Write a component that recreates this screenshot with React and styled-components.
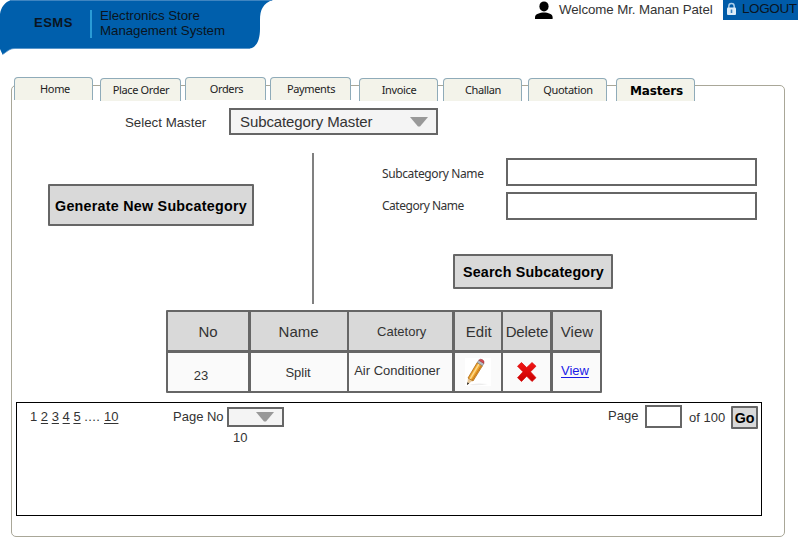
import React from "react";
import styled, { createGlobalStyle } from "styled-components";

const sans = '"Liberation Sans", Arial, sans-serif';
const humanist = '"Noto Sans", "Open Sans", sans-serif';
const dark = "#333";
const line = "#666";

const GlobalStyle = createGlobalStyle`
  * { box-sizing: border-box; }
  body { margin: 0; background: #fff; font-family: ${sans}; color: ${dark}; }
`;

const Page = styled.div`
  width: 800px;
  height: 550px;
  overflow: hidden;
`;

const Label = styled.span`
  display: block;
  white-space: pre;
  font-family: ${(p) => p.$font || sans};
  font-size: ${(p) => p.$size || 13}px;
  line-height: 16px;
  letter-spacing: ${(p) => p.$track || 0}px;
  font-weight: ${(p) => (p.$bold ? 700 : 400)};
  color: ${(p) => p.$color || dark};
  margin: ${(p) => p.$margin || 0};
`;

const Header = styled.header`
  display: flex;
  align-items: flex-start;
  height: 77px;
  & > * { flex: none; }
`;

const Brand = styled.div`
  position: relative;
  display: flex;
  width: 534px;
  height: 56px;
`;

const Banner = styled.svg`
  position: absolute;
  left: 0;
  top: 0;
  z-index: -1;
`;

const BrandRule = styled.div`
  width: 2px;
  height: 28px;
  margin: 10px 8px 0 17px;
  background: #2a9bd6;
`;

const BrandName = styled.div`
  width: 73px;
  padding: 15px 0 0 34px;
`;

const BrandTitle = styled.div`
  padding-top: 8px;
  ${Label} { line-height: 15px; }
`;

const Logout = styled.a`
  display: flex;
  width: 75px;
  height: 20px;
  margin-left: auto;
  margin-right: 2px;
  padding-left: 3px;
  background: #005ba8;
  & > svg { flex: none; }
`;

const Tabs = styled.nav`
  position: relative;
  display: flex;
  height: 24px;
  margin: 0 0 -16px 14px;
`;

const Tab = styled.div`
  width: ${(p) => p.$w}px;
  height: 23px;
  margin: ${(p) => p.$drop || 0}px ${(p) => p.$gap || 0}px 0 0;
  border: 1px solid #8fabb9;
  border-bottom: 0;
  border-radius: 4px 4px 0 0;
  background: #f3f3ea;
  display: flex;
  justify-content: center;
  padding: 3px 0 0 ${(p) => p.$shift ?? 1}px;
`;

const Panel = styled.main`
  width: 774px;
  height: 452px;
  margin-left: 11px;
  border: 1px solid #a9a798;
  border-radius: 5px;
`;

const MasterRow = styled.div`
  display: flex;
  padding: 22px 0 0 113px;
  height: 67px;
`;

const MasterName = styled.div`
  width: 104px;
  padding-top: 7px;
`;

const Select = styled.div`
  display: flex;
  justify-content: space-between;
  align-items: center;
  width: ${(p) => p.$w}px;
  height: ${(p) => p.$h}px;
  padding: 0 8px 0 9px;
  border: 2px solid ${line};
  background: #f4f4f4;
`;

const Arrow = styled.svg`
  margin-left: auto;
`;

const Workspace = styled.section`
  display: flex;
  height: 151px;
`;

const CreatePane = styled.div`
  width: 302px;
  padding: 31px 0 0 36px;
  border-right: 2px solid #808080;
`;

const SearchPane = styled.form`
  padding: 5px 0 0 68px;
`;

const Field = styled.label`
  display: flex;
  height: 28px;
  margin-bottom: 6px;
`;

const FieldName = styled.div`
  width: 124px;
  padding-top: ${(p) => p.$top}px;
`;

const Input = styled.input`
  width: ${(p) => p.$w}px;
  height: ${(p) => p.$h}px;
  margin: ${(p) => p.$margin || 0};
  padding: 0 4px;
  border: 2px solid ${line};
  border-radius: 0;
  background: #fff;
  outline: 0;
`;

const Button = styled.button`
  display: flex;
  justify-content: center;
  align-items: center;
  width: ${(p) => p.$w}px;
  height: ${(p) => p.$h}px;
  margin: ${(p) => p.$margin || 0};
  padding: 0;
  border: 2px solid ${line};
  border-radius: 1px;
  background: #d9d9d9;
`;

const Table = styled.div`
  display: grid;
  grid-template-columns: 80px 96px 103px 46px 47px 47px;
  grid-template-rows: 38px 38px;
  row-gap: 3px;
  justify-content: space-between;
  width: 436px;
  height: 83px;
  margin: 6px 0 9px 154px;
  padding: 2px;
  border-radius: 1px;
  background: ${line};
`;

const Cell = styled.div`
  display: flex;
  justify-content: center;
  align-items: center;
  background: ${(p) => (p.$head ? "#d9d9d9" : "#fafafa")};
`;

const Pager = styled.section`
  display: flex;
  align-items: flex-start;
  width: 746px;
  height: 114px;
  margin-left: 4px;
  padding-left: 13px;
  border: 1px solid #000;
`;

const PageLinks = styled.div`
  width: 143px;
  padding-top: 6px;
  u { text-underline-offset: 2px; }
`;

const Dots = styled.span`
  letter-spacing: 0.4px;
`;

const PagerText = styled.div`
  width: ${(p) => p.$w}px;
  padding-top: ${(p) => p.$top}px;
`;

const PageSize = styled.div`
  width: 57px;
  margin: 4px 324px 0 0;
`;

const Link = styled.span`
  text-decoration: underline;
  text-underline-offset: 2px;
`;

const tabs = [
  { name: "Home", w: 79, gap: 7, shift: 3 },
  { name: "Place Order", w: 81, gap: 4, drop: 1 },
  { name: "Orders", w: 81, gap: 4, shift: 2 },
  { name: "Payments", w: 81, gap: 8 },
  { name: "Invoice", w: 79, gap: 5, drop: 1 },
  { name: "Challan", w: 79, gap: 6, drop: 1 },
  { name: "Quotation", w: 79, gap: 9, drop: 1 },
  { name: "Masters", w: 79, drop: 1, active: true },
];

const DownArrow = () => (
  <Arrow width="18" height="10" viewBox="0 0 18 10">
    <path d="M0 0H18L10 9.5H8Z" fill="#999" />
  </Arrow>
);

const UserIcon = () => (
  <svg width="20" height="20" viewBox="0 0 20 20">
    <ellipse cx="10" cy="6.4" rx="4.6" ry="5" fill="#000" />
    <path d="M1 19V17.2C1 14.2 6 12.6 10 12.6S18.6 14.2 18.6 17.2V19Z" fill="#000" />
  </svg>
);

const LockIcon = () => (
  <svg width="11" height="17" viewBox="0 0 11 17">
    <path d="M2.8 8V6.2a2.7 2.7 0 0 1 5.4 0V8" fill="none" stroke="#a9cdea" strokeWidth="1.5" />
    <rect x="1" y="7.5" width="9" height="7.5" rx="1" fill="#dcecf8" />
    <path d="M5.5 9.5v3.5" stroke="#3c82bd" strokeWidth="1.6" />
  </svg>
);

const PencilIcon = () => (
  <svg width="26" height="28" viewBox="0 0 26 28">
    <rect width="26" height="28" fill="#fff" />
    <path d="M4 27Q9 24.5 23 26Q14 28 4 27Z" fill="#ececec" />
    <path d="M2 27L3 20L7.5 22.8Z" fill="#e8c99b" />
    <path d="M2 27L2.4 24.2L4.2 25.4Z" fill="#222" />
    <path d="M3 20L12.2 4.6L17.4 7.8L8 23Z" fill="#eda52f" stroke="#ad6a16" strokeWidth=".8" />
    <path d="M5.2 20.8L14 6" stroke="#ffd889" strokeWidth="1.5" />
    <path d="M7.3 22L16.4 7.5" stroke="#c97a18" strokeWidth="1" />
    <path d="M12.2 4.6L13.8 2.2L18.9 5.4L17.4 7.8Z" fill="#b9bdc4" stroke="#777" strokeWidth=".6" />
    <path d="M13.8 2.2Q15 .6 17.2 1.6Q19.8 2.7 18.9 5.4Z" fill="#d64a52" stroke="#96333b" strokeWidth=".5" />
  </svg>
);

const CrossIcon = () => (
  <svg width="20" height="20" viewBox="0 0 20 20">
    <defs>
      <linearGradient id="cross" x2="0" y2="1">
        <stop stopColor="#f31616" />
        <stop offset="1" stopColor="#c90000" />
      </linearGradient>
    </defs>
    <path
      d="M4.5 .5L9.7 5.6L15 .5L19 4.2L13.5 9.8L19 15.7L15 19.5L9.7 14.2L4.5 19.5L.5 15.7L6 9.8L.5 4.2Z"
      fill="url(#cross)"
      stroke="#d80808"
      strokeWidth=".7"
      strokeLinejoin="round"
    />
  </svg>
);

export default function App() {
  return (
    <Page>
      <GlobalStyle />
      <Header>
        <Brand>
          <Banner width="274" height="56" viewBox="0 0 274 56">
            <path
              d="M11 0H273C263 3 260 10 260 20V29C260 39 257 48 249 48.5H15C9 48.5 7 52 2.5 54.5L0 49V14C1 7 5 2 11 0Z"
              fill="#005fac"
            />
            <path d="M11 .5H272M250 48.5H15C9 48.5 7 52 2.5 54.5" fill="none" stroke="#4f8fc6" strokeWidth=".8" />
          </Banner>
          <BrandName>
            <Label $bold $size={13} $track={0.5} $color="#0a1420">ESMS</Label>
          </BrandName>
          <BrandRule />
          <BrandTitle>
            <Label $size={13.3} $track={-0.04} $color="#0a1420">Electronics Store</Label>
            <Label $size={13.3} $track={-0.04} $color="#0a1420">Management System</Label>
          </BrandTitle>
        </Brand>
        <UserIcon />
        <Label $size={13.3} $track={-0.09} $margin="2px 0 0 5px">Welcome Mr. Manan Patel</Label>
        <Logout>
          <LockIcon />
          <Label $size={13.5} $track={-0.4} $margin="1px 0 0 5px" $color="#0a1420">LOGOUT</Label>
        </Logout>
      </Header>

      <Tabs>
        {tabs.map((t) => (
          <Tab key={t.name} $w={t.w} $gap={t.gap} $drop={t.drop} $shift={t.shift}>
            <Label
              $font={t.active ? '"DejaVu Sans", sans-serif' : humanist}
              $bold={t.active}
              $size={t.active ? 12 : 11}
              $track={t.active ? -0.15 : -0.35}
              $margin={t.active ? "1px 0 0 1px" : 0}
              $color={t.active ? "#000" : "#222"}
            >
              {t.name}
            </Label>
          </Tab>
        ))}
      </Tabs>

      <Panel>
        <MasterRow>
          <MasterName><Label $size={13.3}>Select Master</Label></MasterName>
          <Select $w={209} $h={27}>
            <Label $size={15} $track={-0.1}>Subcategory Master</Label>
            <DownArrow />
          </Select>
        </MasterRow>

        <Workspace>
          <CreatePane>
            <Button $w={206} $h={42}>
              <Label $bold $size={14.3} $track={0.25} $margin="1px 0 0" $color="#000">Generate New Subcategory</Label>
            </Button>
          </CreatePane>
          <SearchPane>
            <Field>
              <FieldName $top={8}><Label $font={humanist} $size={12} $track={-0.38}>Subcategory Name</Label></FieldName>
              <Input $w={251} $h={28} />
            </Field>
            <Field>
              <FieldName $top={6}><Label $font={humanist} $size={12} $track={-0.48}>Category Name</Label></FieldName>
              <Input $w={251} $h={28} />
            </Field>
            <Button type="button" $w={160} $h={35} $margin="34px 0 0 71px">
              <Label $bold $size={14.3} $track={0.15} $margin="1px 0 0 1px" $color="#000">Search Subcategory</Label>
            </Button>
          </SearchPane>
        </Workspace>

        <Table>
          <Cell $head><Label $size={15} $margin="2px 0 0">No</Label></Cell>
          <Cell $head><Label $size={15} $margin="2px 0 0">Name</Label></Cell>
          <Cell $head><Label $margin="2px 0 0 2px">Catetory</Label></Cell>
          <Cell $head><Label $size={15} $margin="2px 0 0 2px">Edit</Label></Cell>
          <Cell $head><Label $size={15} $track={-0.15} $margin="2px 0 0">Delete</Label></Cell>
          <Cell $head><Label $size={15} $margin="2px 0 0 1px">View</Label></Cell>
          <Cell><Label $margin="7px 14px 0 0">23</Label></Cell>
          <Cell><Label $margin="2px 1px 0 0">Split</Label></Cell>
          <Cell><Label $margin="0 7px 3px 0">Air Conditioner</Label></Cell>
          <Cell><PencilIcon /></Cell>
          <Cell><CrossIcon /></Cell>
          <Cell><Label $color="#1a1ae6" $margin="0 3px 3px 0"><Link>View</Link></Label></Cell>
        </Table>

        <Pager>
          <PageLinks>
            <Label>1 <u>2</u> <u>3</u> <u>4</u> <u>5</u> <Dots>....</Dots> <u>10</u></Label>
          </PageLinks>
          <PagerText $w={54} $top={6}><Label>Page No</Label></PagerText>
          <PageSize>
            <Select $w={57} $h={20}><DownArrow /></Select>
            <Label $margin="3px 0 0 6px">10</Label>
          </PageSize>
          <PagerText $w={37} $top={5}><Label>Page</Label></PagerText>
          <Input $w={37} $h={23} $margin="2px 0 0" />
          <Label $margin="7px 6px 0 7px">of 100</Label>
          <Button $w={27} $h={23} $margin="3px 0 0">
            <Label $bold $size={14.3} $color="#000">Go</Label>
          </Button>
        </Pager>
      </Panel>
    </Page>
  );
}
